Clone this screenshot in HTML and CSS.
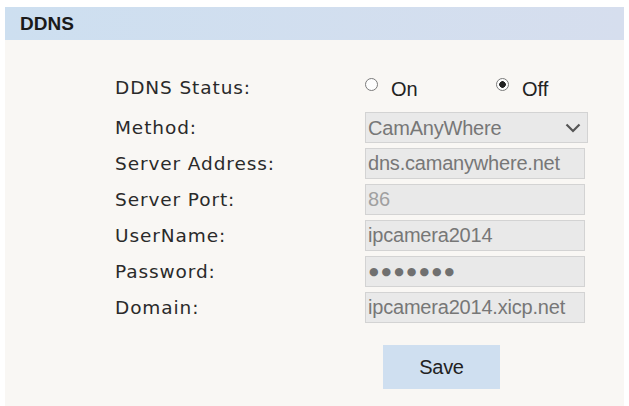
FILE: index.html
```html
<!DOCTYPE html>
<html lang="en">
<head>
    <meta charset="UTF-8">
    <title>DDNS</title>
    <link rel="stylesheet" href="styles.css">
</head>
<body>

    <div class="panel">
        <div class="panel-title">DDNS</div>

        <form class="ddns-form">
            <div class="row status-row">
                <span class="label">DDNS Status:</span>
                <div class="radios">
                    <label class="radio"><input type="radio" name="status" value="on"> On</label>
                    <label class="radio"><input type="radio" name="status" value="off" checked> Off</label>
                </div>
            </div>

            <div class="row">
                <span class="label">Method:</span>
                <div class="select-wrap">
                    <select class="field">
                        <option>CamAnyWhere</option>
                    </select>
                    <svg class="chevron" width="16" height="10" viewBox="0 0 16 10">
                        <path d="M1.5 1.5 L8 8 L14.5 1.5" fill="none" stroke="#555" stroke-width="2.2"/>
                    </svg>
                </div>
            </div>

            <div class="row">
                <span class="label">Server Address:</span>
                <input class="field" type="text" value="dns.camanywhere.net" readonly>
            </div>

            <div class="row">
                <span class="label">Server Port:</span>
                <input class="field light" type="text" value="86" readonly>
            </div>

            <div class="row">
                <span class="label">UserName:</span>
                <input class="field" type="text" value="ipcamera2014" readonly>
            </div>

            <div class="row">
                <span class="label">Password:</span>
                <div class="field dots">●●●●●●●</div>
            </div>

            <div class="row">
                <span class="label">Domain:</span>
                <input class="field" type="text" value="ipcamera2014.xicp.net" readonly>
            </div>

            <div class="actions">
                <button type="button" class="save">Save</button>
            </div>
        </form>
    </div>

</body>
</html>
```

FILE: styles.css
```css
body, html {
    margin: 0;
    padding: 0;
    height: 100%;
    background: #fff;
}

.panel {
    margin: 7px 5px 0 5px;
    height: 399px;
    background: #f9f7f4;
}

/* title bar */
.panel-title {
    height: 33px;
    line-height: 34px;
    padding-left: 15px;
    background: linear-gradient(to right, #cddff0, #d6deee);
    font-family: "Liberation Sans", Arial, sans-serif;
    font-weight: bold;
    font-size: 19px;
    color: #1a1a1a;
}

.ddns-form {
    padding: 32px 0 0 110px;
}

.row {
    display: grid;
    grid-template-columns: 250px 220px;
    align-items: center;
    height: 31px;
    margin-bottom: 5px;
}

.status-row {
    margin-bottom: 9px;
}

.label {
    font-family: "DejaVu Sans", Verdana, sans-serif;
    font-size: 18.5px;
    letter-spacing: 0.9px;
    color: #2a2a2a;
}

.radios {
    display: flex;
    font-family: "Liberation Sans", Arial, sans-serif;
    font-size: 20px;
    color: #222;
}

.radio {
    display: flex;
    align-items: center;
    flex-shrink: 0;
    width: 131px;
    padding-top: 4px;
}

/* hand drawn radio circle */
.radio input {
    appearance: none;
    -webkit-appearance: none;
    box-sizing: border-box;
    flex-shrink: 0;
    margin: -11px 13px 0 0;
    width: 13px;
    height: 13px;
    border: 1px solid #7a7a7a;
    border-radius: 50%;
    background: #fdfdfd;
}

.radio input:checked {
    background: radial-gradient(circle, #222 0 3px, #fdfdfd 3.6px);
}

.field {
    box-sizing: border-box;
    width: 220px;
    height: 31px;
    margin: 0;
    padding: 0 0 0 2px;
    border: 1px solid #d3d3d3;
    background: #e9e9e9;
    font-family: "Liberation Sans", Arial, sans-serif;
    font-size: 20px;
    letter-spacing: -0.2px;
    color: #777;
    outline: none;
}

.field.light {
    color: #a0a0a0;
}

.dots {
    display: flex;
    align-items: center;
    font-family: "DejaVu Sans", sans-serif;
    font-size: 11px;
    letter-spacing: 3px;
    color: #707070;
    padding-left: 3px;
}

.select-wrap {
    position: relative;
    width: 223px;
}

.select-wrap .field {
    width: 223px;
    appearance: none;
    -webkit-appearance: none;
    border-radius: 0;
}

.chevron {
    position: absolute;
    right: 7px;
    top: 11px;
    pointer-events: none;
}

.actions {
    padding: 17px 0 0 268px;
}

.save {
    width: 117px;
    height: 44px;
    border: none;
    background: #cfdff0;
    font-family: "Liberation Sans", Arial, sans-serif;
    font-size: 20px;
    color: #222;
    letter-spacing: -0.3px;
}
```
